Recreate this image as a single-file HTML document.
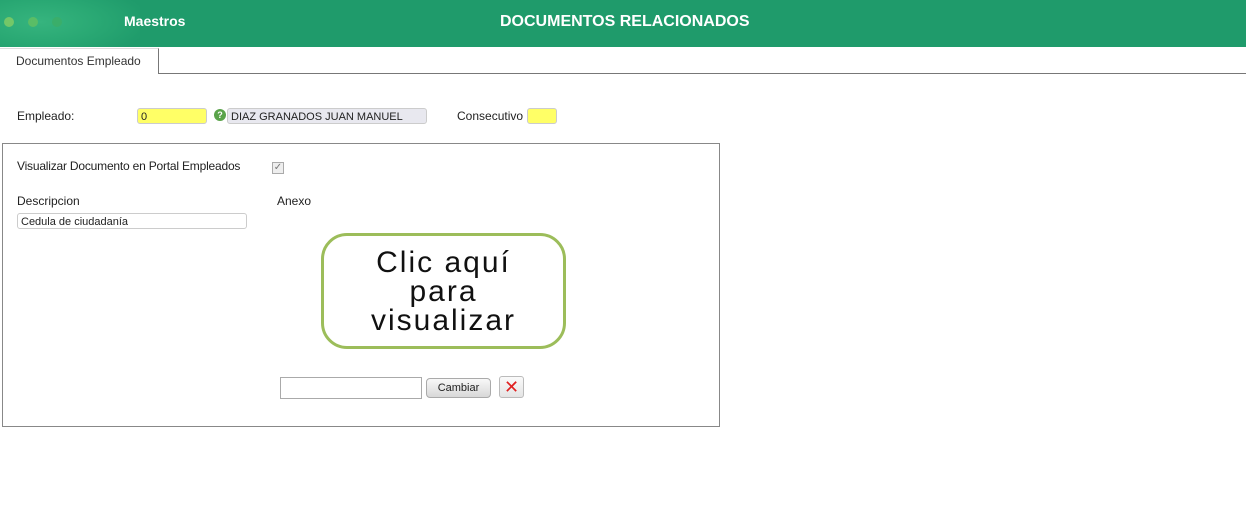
<!DOCTYPE html>
<html><head><meta charset="utf-8"><style>
*{box-sizing:border-box;margin:0;padding:0}
body{width:1246px;height:532px;background:#fff;font-family:"Liberation Sans",sans-serif;font-size:12px;color:#222;position:relative;overflow:hidden}
.a{position:absolute}
.hdr{left:0;top:0;width:1246px;height:47px;background:#1f9b6b}
.glow{left:0;top:0;width:140px;height:47px;background:radial-gradient(ellipse 110px 40px at 40px 22px,#36b47e 0,#2aa974 50%,rgba(31,155,107,0) 100%)}
.dot{width:10px;height:10px;border-radius:50%;top:17px}
</style></head><body>
<div class="a hdr"></div>
<div class="a glow"></div>
<div class="a dot" style="left:4px;background:#74c768"></div>
<div class="a dot" style="left:28px;background:#5abd66"></div>
<div class="a dot" style="left:52px;background:#3aae6a"></div>
<div class="a" style="left:124px;top:13px;color:#fff;font-weight:bold;font-size:14px">Maestros</div>
<div class="a" style="left:500px;top:13px;color:#fff;font-weight:bold;font-size:16px">DOCUMENTOS RELACIONADOS</div>
<div class="a" style="left:0;top:73px;width:1246px;border-top:1px solid #777"></div>
<div class="a" style="left:0;top:48px;width:159px;height:26px;border-right:1px solid #777;border-top:1px solid #ddd;background:#fff"></div>
<div class="a" style="left:16px;top:54px;font-size:12px;color:#333">Documentos Empleado</div>
<div class="a" style="left:17px;top:109px">Empleado:</div>
<div class="a" style="left:137px;top:108px;width:70px;height:16px;background:#ffff66;border:1px solid #ccc;border-radius:3px;font-size:11px;padding:2px 3px">0</div>
<div class="a" style="left:214px;top:109px;width:12px;height:12px;border-radius:50%;background:#5aa34a;color:#fff;font-size:9px;font-weight:bold;text-align:center;line-height:12px">?</div>
<div class="a" style="left:227px;top:108px;width:200px;height:16px;background:#e8e8ef;border:1px solid #ccc;border-radius:3px;font-size:11px;padding:2px 3px">DIAZ GRANADOS JUAN MANUEL</div>
<div class="a" style="left:457px;top:109px">Consecutivo</div>
<div class="a" style="left:527px;top:108px;width:30px;height:16px;background:#ffff66;border:1px solid #ccc;border-radius:3px"></div>
<div class="a" style="left:2px;top:143px;width:718px;height:284px;border:1px solid #888"></div>
<div class="a" style="left:17px;top:159px;font-size:12px;letter-spacing:-0.2px">Visualizar Documento en Portal Empleados</div>
<div class="a" style="left:272px;top:162px;width:12px;height:12px;border:1px solid #aaa;background:#eee;font-size:10px;color:#777;line-height:10px;text-align:center">✓</div>
<div class="a" style="left:17px;top:194px">Descripcion</div>
<div class="a" style="left:277px;top:194px">Anexo</div>
<div class="a" style="left:17px;top:213px;width:230px;height:16px;border:1px solid #ccc;border-radius:3px;font-size:11px;padding:2px 3px">Cedula de ciudadanía</div>
<div class="a" style="left:321px;top:233px;width:245px;height:116px;border:3px solid #9cbd5a;border-radius:26px;text-align:center;font-size:30px;line-height:29px;color:#111;padding-top:12px;letter-spacing:2px">Clic aquí<br>para<br>visualizar</div>
<div class="a" style="left:280px;top:377px;width:142px;height:22px;border:1px solid #aaa"></div>
<div class="a" style="left:426px;top:378px;width:65px;height:20px;border:1px solid #aaa;border-radius:4px;background:linear-gradient(#f8f8f8,#d8d8d8);font-size:11px;text-align:center;line-height:18px">Cambiar</div>
<div class="a" style="left:499px;top:376px;width:25px;height:22px;border:1px solid #bbb;border-radius:3px;background:linear-gradient(#fafafa,#e4e4e4);color:#e02020;font-size:18px;text-align:center;line-height:20px">✕</div>
</body></html>
